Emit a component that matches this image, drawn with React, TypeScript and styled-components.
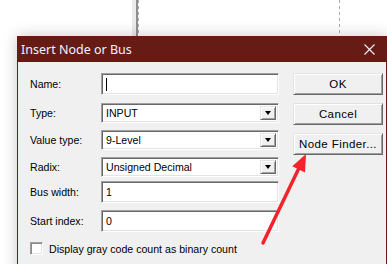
import styled, { createGlobalStyle } from 'styled-components';

const GlobalStyle = createGlobalStyle`
  html, body {
    margin: 0;
    padding: 0;
    background: #ffffff;
  }
  body {
    font-family: "Liberation Sans", Arial, sans-serif;
  }
`;

const Page = styled.div`
  position: relative;
  width: 387px;
  height: 264px;
  overflow: hidden;
  background: #ffffff;
`;

const Backdrop = styled.div`
  display: flex;
  height: 100%;
  .pane {
    width: 132px;
  }
  .splitter {
    width: 4px;
    background: #ebebeb;
    border-right: 2px solid #8e8e8e;
  }
  .track {
    width: 200px;
  }
`;

const DashLine = styled.div`
  width: 1px;
  background: repeating-linear-gradient(to bottom, #ababab 0 3px, transparent 3px 6px);
`;

const Dialog = styled.div`
  position: absolute;
  left: 17px;
  top: 36px;
  width: 370px;
  box-sizing: border-box;
  border: 1px solid #661c14;
  border-top: none;
  box-shadow: 0 0 14px rgba(0, 0, 0, 0.22);
`;

const TitleBar = styled.div`
  display: flex;
  align-items: center;
  justify-content: space-between;
  height: 26px;
  background: #661c14;
  padding-left: 3px;
  font-family: "Noto Sans", "Liberation Sans", sans-serif;
  font-size: 12.5px;
  color: #eef3ff;
`;

const CloseButton = styled.div`
  display: flex;
  align-items: center;
  justify-content: center;
  width: 34px;
  height: 26px;
`;

const Client = styled.div`
  display: flex;
  gap: 14px;
  height: 220px;
  background: #f0f0f0;
  padding: 11px 0 0 12px;
  font-size: 10.6px;
  color: #000;
`;

const Form = styled.div`
  display: flex;
  flex-direction: column;
`;

const Row = styled.div<{ $top: number; $h: number }>`
  display: flex;
  align-items: center;
  margin-top: ${(p) => p.$top}px;
  height: ${(p) => p.$h}px;
`;

const Label = styled.div`
  width: 71px;
`;

const Sunken = styled.div`
  box-sizing: border-box;
  width: 178px;
  height: 100%;
  background: #ffffff;
  border: 1px solid;
  border-color: #a0a0a0 #ffffff #ffffff #a0a0a0;
  box-shadow: inset 1px 1px #696969, inset -1px -1px #e3e3e3;
  display: flex;
  align-items: center;
  padding: 2px 2px 2px 4px;
`;

const Value = styled.div`
  flex: 1;
`;

const Caret = styled.div`
  width: 1px;
  height: 13px;
  background: #000;
`;

const DropButton = styled.div`
  box-sizing: border-box;
  width: 16px;
  height: 100%;
  background: #f0f0f0;
  border: 1px solid;
  border-color: #e3e3e3 #696969 #696969 #e3e3e3;
  box-shadow: inset 1px 1px #ffffff, inset -1px -1px #a0a0a0;
  display: flex;
  align-items: center;
  justify-content: center;
  &::after {
    content: '';
    border-left: 3.5px solid transparent;
    border-right: 3.5px solid transparent;
    border-top: 4px solid #000;
  }
`;

const CheckBox = styled.div`
  box-sizing: border-box;
  width: 13px;
  height: 13px;
  background: #fff;
  border: 1px solid;
  border-color: #a0a0a0 #ffffff #ffffff #a0a0a0;
  box-shadow: inset 1px 1px #8a8a8a, inset -1px -1px #e3e3e3;
  margin-right: 6px;
`;

const Buttons = styled.div`
  display: flex;
  flex-direction: column;
  gap: 8px;
`;

const Button = styled.div`
  box-sizing: border-box;
  width: 90px;
  height: 22px;
  background: #f0f0f0;
  border: 1px solid;
  border-color: #e3e3e3 #696969 #696969 #e3e3e3;
  box-shadow: inset 1px 1px #ffffff, inset -1px -1px #a0a0a0;
  display: flex;
  align-items: center;
  justify-content: center;
  font-size: 11.5px;
  letter-spacing: 0.4px;
`;

const Arrow = styled.svg`
  position: absolute;
  left: 0;
  top: 0;
  pointer-events: none;
`;

type FieldRow = { label: string; top: number; h: number; value?: string; select?: boolean; caret?: boolean };

const rows: FieldRow[] = [
  { label: 'Name:', top: 0, h: 22, caret: true },
  { label: 'Type:', top: 8, h: 20, value: 'INPUT', select: true },
  { label: 'Value type:', top: 7, h: 20, value: '9-Level', select: true },
  { label: 'Radix:', top: 7, h: 20, value: 'Unsigned Decimal', select: true },
  { label: 'Bus width:', top: 4, h: 22, value: '1' },
  { label: 'Start index:', top: 7, h: 22, value: '0' },
];

export default function App() {
  return (
    <Page>
      <GlobalStyle />
      <Backdrop>
        <div className="pane" />
        <div className="splitter" />
        <DashLine />
        <div className="track" />
        <DashLine />
      </Backdrop>
      <Dialog>
        <TitleBar>
          <span>Insert Node or Bus</span>
          <CloseButton>
            <svg width="11" height="11" viewBox="0 0 11 11">
              <path d="M0.5 0.5 L10.5 10.5 M10.5 0.5 L0.5 10.5" stroke="#f4f4f4" strokeWidth="1.1" />
            </svg>
          </CloseButton>
        </TitleBar>
        <Client>
          <Form>
            {rows.map((r) => (
              <Row key={r.label} $top={r.top} $h={r.h}>
                <Label>{r.label}</Label>
                <Sunken>
                  {r.caret && <Caret />}
                  <Value>{r.value}</Value>
                  {r.select && <DropButton />}
                </Sunken>
              </Row>
            ))}
            <Row $top={10} $h={13}>
              <CheckBox />
              <span>Display gray code count as binary count</span>
            </Row>
          </Form>
          <Buttons>
            <Button>OK</Button>
            <Button>Cancel</Button>
            <Button>Node Finder...</Button>
          </Buttons>
        </Client>
      </Dialog>
      <Arrow width="387" height="264" viewBox="0 0 387 264">
        <line x1="263" y1="243" x2="299" y2="168" stroke="#f2232b" strokeWidth="3.5" strokeLinecap="round" />
        <polygon points="306,154 305,172.5 292.3,166.3" fill="#f2232b" />
      </Arrow>
    </Page>
  );
}
